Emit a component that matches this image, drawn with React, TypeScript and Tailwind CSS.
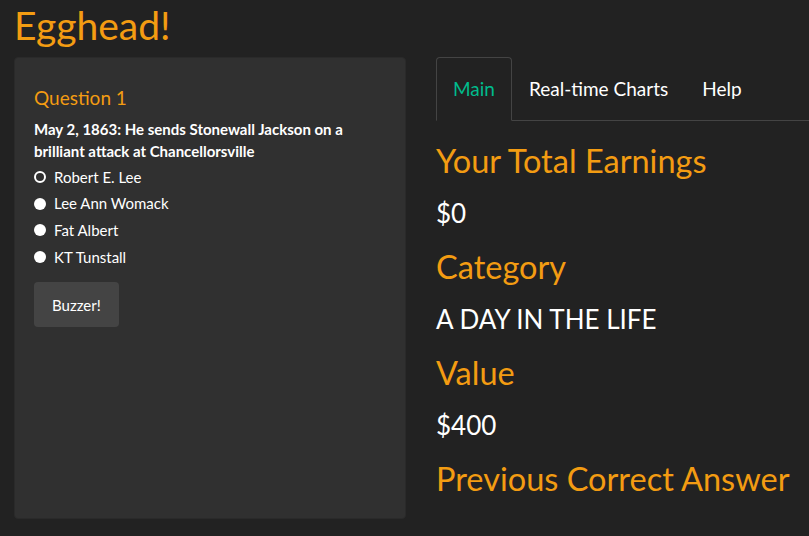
import { useState } from 'react';

const answers = ['Robert E. Lee', 'Lee Ann Womack', 'Fat Albert', 'KT Tunstall'];
const tabs = ['Main', 'Real-time Charts', 'Help'];

function Stat({ label, value }: { label: string; value: string }) {
  return (
    <div>
      <h3 className="text-[32.5px] leading-[36px] text-[#f39c12] mt-[16px] mb-[14px]">{label}</h3>
      <div className="text-[26px] leading-[40px] text-white">{value}</div>
    </div>
  );
}

export default function App() {
  const [tab, setTab] = useState('Main');
  const [picked, setPicked] = useState('Robert E. Lee');

  return (
    <div className="min-h-screen bg-[#222222] text-white font-['Lato','Noto_Sans',sans-serif] overflow-hidden">
      <h1 className="px-[14px] pt-[4px] text-[39px] leading-[1.1] text-[#f39c12]">Egghead!</h1>

      <div className="flex pl-[14px] mt-[10px]">
        <div className="w-[392px] h-[462px] shrink-0 bg-[#303030] border border-[#2a2a2a] rounded-[4px] px-[19px] pt-[29px]">
          <div className="text-[19px] leading-[1.2] text-[#f39c12] mb-[8px]">Question 1</div>
          <div className="text-[15px] leading-[22px] font-bold text-white">
            May 2, 1863: He sends Stonewall Jackson on a brilliant attack at Chancellorsville
          </div>
          <div className="mt-[2px] flex flex-col">
            {answers.map((a) => (
              <label key={a} className="flex items-center gap-[8px] h-[26.67px] text-[15px] text-white cursor-pointer">
                <span
                  className={`w-[12px] h-[12px] rounded-full ${picked === a ? 'bg-[#303030] border-[2.5px] border-white' : 'bg-white'}`}
                  onClick={() => setPicked(a)}
                />
                {a}
              </label>
            ))}
          </div>
          <button
            type="button"
            className="mt-[12px] h-[45px] px-[18px] bg-[#444444] rounded-[4px] text-[15px] text-white"
          >
            Buzzer!
          </button>
        </div>

        <div className="ml-[30px] flex-1 min-w-0">
          <div className="flex border-b border-[#444444] h-[64px]">
            {tabs.map((t) => (
              <button
                key={t}
                type="button"
                onClick={() => setTab(t)}
                className={`px-[16px] text-[19px] h-[64px] rounded-t-[4px] ${
                  tab === t
                    ? 'text-[#00bc8c] border border-[#444444] border-b-[#222222] -mb-px bg-[#222222]'
                    : 'text-white border border-transparent'
                }`}
              >
                {t}
              </button>
            ))}
          </div>
          <div className="pt-[6px]">
            <Stat label="Your Total Earnings" value="$0" />
            <Stat label="Category" value="A DAY IN THE LIFE" />
            <Stat label="Value" value="$400" />
            <h3 className="text-[32.5px] leading-[36px] text-[#f39c12] mt-[16px] whitespace-nowrap">Previous Correct Answer</h3>
          </div>
        </div>
      </div>
    </div>
  );
}
